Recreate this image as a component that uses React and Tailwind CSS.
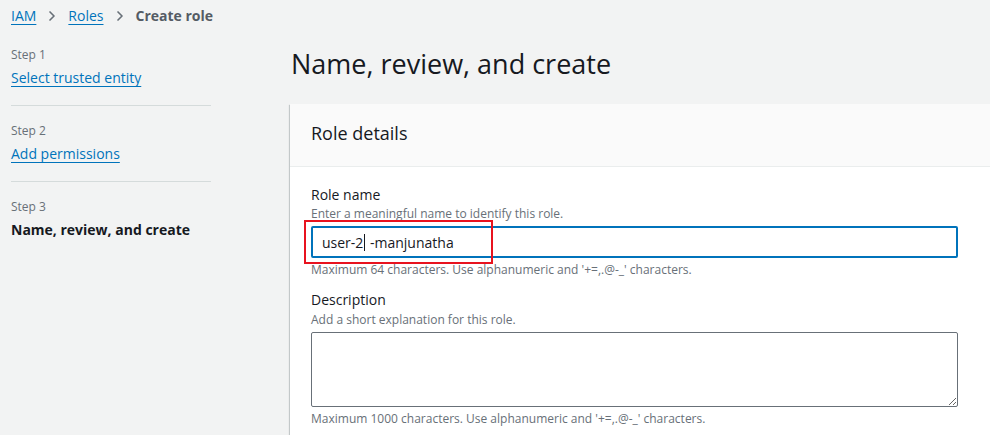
import { ChevronRight } from 'lucide-react'

const font = { fontFamily: '"Open Sans", "Noto Sans", Arial, sans-serif' }

function Crumb({ children }) {
  return <a className="text-[#0073bb] underline underline-offset-[3px] decoration-1">{children}</a>
}

function Step({ n, label, current, last }) {
  return (
    <div className={`pt-[17px] pb-[17px] ${last ? '' : 'border-b border-[#d5dbdb]'}`}>
      <p className="text-[12px] leading-[16px] text-[#687078]">Step {n}</p>
      {current ? (
        <p className="mt-[5px] text-[14px] leading-[20px] font-bold text-[#16191f]">{label}</p>
      ) : (
        <a className="mt-[5px] block text-[14px] leading-[20px] text-[#0073bb] underline underline-offset-[3px]">{label}</a>
      )}
    </div>
  )
}

export default function App() {
  return (
    <div style={font} className="w-[990px] h-[435px] overflow-hidden bg-[#f2f3f3] text-[#16191f]">
      {/* Breadcrumb */}
      <div className="flex items-center h-[31px] pl-[11px] text-[14px]">
        <Crumb>IAM</Crumb>
        <ChevronRight className="w-[16px] h-[16px] mx-[8px] text-[#687078]" strokeWidth={2.5} />
        <Crumb>Roles</Crumb>
        <ChevronRight className="w-[16px] h-[16px] mx-[8px] text-[#687078]" strokeWidth={2.5} />
        <span className="font-bold text-[#545b64]">Create role</span>
      </div>

      <div className="flex">
        {/* Steps nav */}
        <div className="w-[200px] ml-[11px] shrink-0 mt-[-1px]">
          <Step n={1} label="Select trusted entity" />
          <Step n={2} label="Add permissions" />
          <Step n={3} label="Name, review, and create" current last />
        </div>

        {/* Main */}
        <div className="ml-[79px] flex-1">
          <h1 className="text-[27px] leading-[36px] font-normal mt-[15px] ml-[1px]">Name, review, and create</h1>

          <div className="mt-[22px] bg-white shadow-[0_1px_1px_0_rgba(0,28,36,0.3),1px_1px_1px_0_rgba(0,28,36,0.15),-1px_1px_1px_0_rgba(0,28,36,0.15)]">
            <div className="h-[63px] flex items-center px-[21px] pb-[4px] bg-[#fafafa] border-b border-[#eaeded]">
              <h2 className="text-[18px] leading-[22px] font-normal">Role details</h2>
            </div>

            <div className="pl-[21px] pr-[32px] pt-[18px] pb-[20px]">
              <label className="block text-[14px] leading-[20px] mb-[1px]">Role name</label>
              <p className="text-[12px] leading-[16px] text-[#687078]">Enter a meaningful name to identify this role.</p>

              <div className="relative mt-[4px]">
                <div className="h-[32px] border-2 border-[#0073bb] rounded-[2px] flex items-center pl-[9px] text-[14px] text-[#16191f]">
                  <span>user-2</span>
                  <span className="inline-block w-px h-[17px] bg-[#16191f] mx-[1px]" />
                  <span>&nbsp;-manjunatha</span>
                </div>
                <div className="absolute left-[-7px] top-[-6px] w-[189px] h-[44px] border-2 border-[#e8131f]" />
              </div>
              <p className="mt-[4px] text-[12px] leading-[16px] text-[#687078]">Maximum 64 characters. Use alphanumeric and '+=,.@-_' characters.</p>

              <label className="block mt-[12px] text-[14px] leading-[20px] mb-[2px]">Description</label>
              <p className="text-[12px] leading-[16px] text-[#687078]">Add a short explanation for this role.</p>
              <textarea className="mt-[4px] block w-full h-[75px] border border-[#687078] rounded-[2px] bg-white" />
              <p className="mt-[4px] text-[12px] leading-[16px] text-[#687078]">Maximum 1000 characters. Use alphanumeric and '+=,.@-_' characters.</p>
            </div>
          </div>
        </div>
      </div>
    </div>
  )
}
